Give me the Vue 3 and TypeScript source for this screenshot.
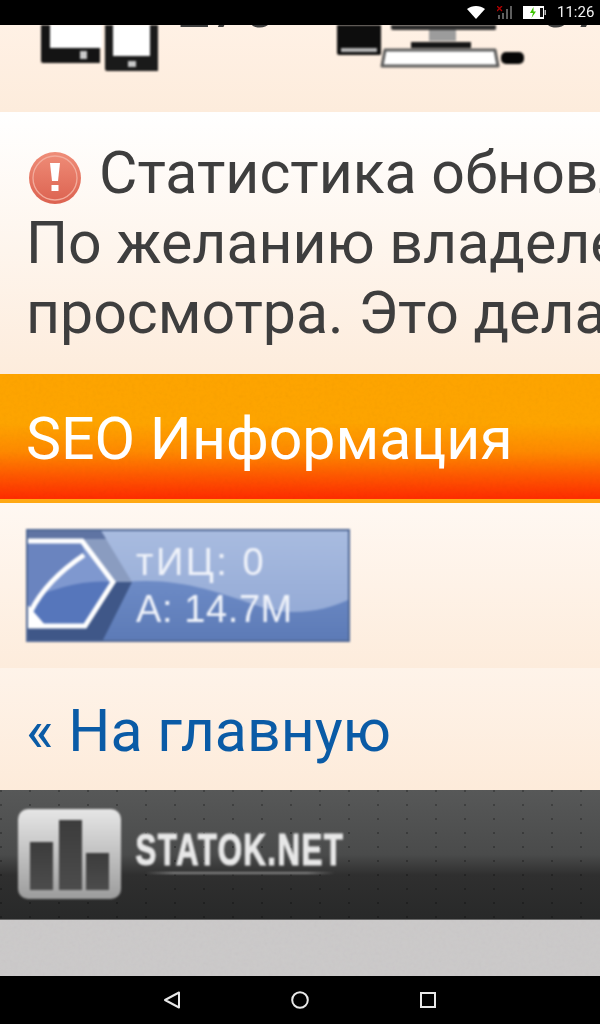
<script setup lang="ts">
const lines: string[] = ['По желанию владелец сайта', 'просмотра. Это делается бесплатно']
</script>

<template>
  <div class="phone">
    <svg class="defs" width="0" height="0">
      <defs>
        <filter id="grain" x="0" y="0" width="100%" height="100%">
          <feTurbulence type="fractalNoise" baseFrequency="0.28" numOctaves="2" seed="4" />
          <feColorMatrix type="saturate" values="0.400" />
        </filter>
      </defs>
    </svg>
    <header class="status">
      <svg class="wifi" width="18" height="13" viewBox="0 0 18 13"><path d="M0 3 C5 -1 13 -1 18 3 L9 13 Z" fill="#fff" /></svg>
      <svg class="signal" width="15" height="13" viewBox="0 0 15 13">
        <path d="M1 9h2v4H1zM5 7h2v6H5zM9 3h2v10H9zM13 0h2v13h-2z" fill="#5e5e5e" />
        <path d="M0 0 L5 5 M5 0 L0 5" stroke="#b00000" stroke-width="1.300" />
      </svg>
      <svg class="battery" width="23" height="13" viewBox="0 0 23 13">
        <rect x="0" y="0" width="21" height="13" fill="#fff" />
        <rect x="17" y="2" width="3" height="9" fill="#111" />
        <rect x="21.500" y="4" width="1.500" height="5" fill="#bbb" />
        <path d="M10.500 1 L7 7 H10 L8.500 12 L13 5.500 H10.500 Z" fill="#3cc400" />
      </svg>
      <span class="clock">11:26</span>
    </header>

    <main class="page">
      <section class="devices">
        <div class="device-row">
          <svg class="dev-a" width="120" height="48" viewBox="0 0 120 48">
            <path d="M1 0H60V38H3Q1 38 1 36Z" fill="#141414" />
            <path d="M65 0H118V46H67Q65 46 65 44Z" fill="#1a1a1a" />
            <rect x="10" y="0" width="52" height="23" fill="#fff" />
            <rect x="40" y="26" width="7" height="8" fill="#c9c9c9" />
            <rect x="73" y="0" width="37" height="31" fill="#fff" />
            <rect x="88" y="36" width="8" height="6" fill="#c9c9c9" />
          </svg>
          <span class="dev-num">270</span>
          <svg class="dev-b" width="190" height="44" viewBox="0 0 190 44">
            <path d="M0 0H44V29Q44 30 42 30H2Q0 30 0 28Z" fill="#0d0d0d" />
            <rect x="4" y="23" width="36" height="4" fill="#b5b5b5" />
            <path d="M54 0H159V4Q159 5 157 5H56Q54 5 54 3Z" fill="#2a2a2a" />
            <rect x="92" y="5" width="27" height="11" fill="#9c9c9c" />
            <rect x="74" y="17" width="60" height="6" fill="#161616" />
            <path d="M48 25H158L161 41H45Z" fill="#fff" stroke="#5c5c5c" stroke-width="3" stroke-linejoin="round" />
            <rect x="164" y="27" width="23" height="12" rx="5" fill="#060606" />
          </svg>
          <span class="dev-num dev-num-b">07</span>
        </div>
      </section>

      <section class="notice">
        <p class="notice-line">
          <svg class="alert" width="54" height="54" viewBox="0 0 54 54">
            <defs>
              <linearGradient id="alertFill" x1="0" y1="0" x2="0" y2="1">
                <stop offset="0" stop-color="#ef8d78" />
                <stop offset="1" stop-color="#dc6250" />
              </linearGradient>
            </defs>
            <circle cx="27" cy="27" r="26" fill="url(#alertFill)" />
            <circle cx="27" cy="27" r="22" fill="none" stroke="#f3ac9c" stroke-width="1.300" />
            <path d="M22 12h10l-2 18h-6z" fill="#fff" />
            <rect x="23.500" y="34" width="7" height="6" fill="#fff" />
          </svg>
          <span>Статистика обновляется</span>
        </p>
        <p v-for="line in lines" :key="line" class="notice-line">{{ line }}</p>
      </section>

      <h2 class="seo-title">
        <svg class="grain grain-hot" width="600" height="125"><rect width="600" height="125" filter="url(#grain)" /></svg>
        <span class="seo-text">SEO Информация</span>
      </h2>

      <section class="badge-wrap">
        <div class="badge">
          <svg class="badge-art" width="324" height="113" viewBox="0 0 324 113">
            <defs>
              <linearGradient id="bTop" x1="0" y1="0" x2="0" y2="1">
                <stop offset="0" stop-color="#a9bce0" />
                <stop offset="1" stop-color="#8ea5d3" />
              </linearGradient>
              <linearGradient id="bLow" x1="0" y1="0" x2="0" y2="1">
                <stop offset="0" stop-color="#6d8bc6" />
                <stop offset="1" stop-color="#5c7ab6" />
              </linearGradient>
            </defs>
            <rect width="324" height="113" fill="url(#bTop)" />
            <path d="M100 53 C150 48 190 62 235 78 C265 88 300 82 324 70 V113 H76Z" fill="url(#bLow)" />
            <path d="M0 0H74L106 53H0Z" fill="#8a9cc0" />
            <path d="M0 0H74L80 10H0Z" fill="#5f74a3" />
            <path d="M0 53H106L76 113H0Z" fill="#3f5788" />
            <path d="M0 12H56L87 53 59 97H0Z" fill="#7f98cf" />
            <path d="M88 53 59 97H0V70C30 60 55 50 88 53Z" fill="#5676bb" />
            <path d="M0 12H56L58 26C34 42 16 60 5 82L0 90Z" fill="#6a84bf" />
            <path d="M0 12H56L87 53 59 97H0" fill="none" stroke="#fff" stroke-width="5" />
            <path d="M58 26 C34 42 16 60 5 82" fill="none" stroke="#fff" stroke-width="5" />
            <path d="M0 74L20 97H0Z" fill="#fff" />
            <rect x="1" y="1" width="322" height="111" fill="none" stroke="#4f6794" stroke-width="2" />
          </svg>
          <span class="badge-text badge-t1">тИЦ: 0</span>
          <span class="badge-text badge-t2">А: 14.7M</span>
        </div>
      </section>

      <section class="home-row">
        <a class="home-link" href="#">« На главную</a>
      </section>

      <footer class="logo-bar">
        <svg class="logo-icon" width="103" height="90" viewBox="0 0 103 90">
          <defs>
            <linearGradient id="logoFill" x1="0" y1="0" x2="0" y2="1">
              <stop offset="0" stop-color="#e6e6e6" />
              <stop offset="1" stop-color="#9c9c9c" />
            </linearGradient>
            <linearGradient id="barFill" x1="0" y1="0" x2="0" y2="1">
              <stop offset="0" stop-color="#3c3c3c" />
              <stop offset="1" stop-color="#4c4c4c" />
            </linearGradient>
          </defs>
          <rect width="103" height="90" rx="10" fill="url(#logoFill)" />
          <rect x="12" y="33" width="23" height="48" fill="url(#barFill)" />
          <rect x="41" y="11" width="23" height="70" fill="url(#barFill)" />
          <rect x="68" y="44" width="23" height="37" fill="url(#barFill)" />
        </svg>
        <div class="logo-brand">
          <span class="logo-word">STATOK.NET</span>
          <span class="logo-rule"></span>
        </div>
      </footer>

      <div class="gray-fill">
        <svg class="grain grain-soft" width="600" height="56"><rect width="600" height="56" filter="url(#grain)" /></svg>
      </div>
    </main>

    <nav class="softkeys">
      <svg width="20" height="20" viewBox="0 0 20 20"><path d="M17 2.500 V17.500 L3 10 Z" fill="none" stroke="#e8e8e8" stroke-width="2" stroke-linejoin="round" /></svg>
      <svg width="20" height="20" viewBox="0 0 20 20"><circle cx="10" cy="10" r="7.800" fill="none" stroke="#e8e8e8" stroke-width="2" /></svg>
      <svg width="20" height="20" viewBox="0 0 20 20"><rect x="3" y="3" width="14" height="14" fill="none" stroke="#e8e8e8" stroke-width="2" /></svg>
    </nav>
  </div>
</template>

<style scoped>
.phone {
  width: 600px;
  height: 1024px;
  display: flex;
  flex-direction: column;
  overflow: hidden;
  font-family: Roboto, "Noto Sans", sans-serif;
  background: #000;
}
.defs { position: absolute; }
.status {
  flex: 0 0 25px;
  height: 25px;
  background: #000;
  display: flex;
  align-items: center;
  justify-content: flex-end;
  padding-right: 8px;
  box-sizing: border-box;
  position: relative;
  z-index: 1;
}
.wifi { margin-right: 12px; }
.signal { margin-right: 11px; }
.battery { margin-right: 11px; }
.clock { color: #f2f2f2; font-size: 15px; line-height: 25px; width: 35px; white-space: nowrap; }
.page { flex: 1; min-height: 0; overflow: hidden; display: flex; flex-direction: column; }
.devices {
  flex: 0 0 87px;
  background: linear-gradient(#fff1e5, #fdecdc);
}
.device-row { display: flex; align-items: flex-start; padding-left: 40px; }
.dev-a { flex: none; filter: blur(.8px); }
.dev-num {
  font-size: 59px;
  line-height: 59px;
  margin-top: -48px;
  margin-left: 17px;
  color: #3e3e3e;
  flex: none;
}
.dev-b { flex: none; margin-left: 61px; filter: blur(.8px); }
.dev-num-b { margin-left: 12px; }
.notice {
  flex: 0 0 262px;
  box-sizing: border-box;
  padding: 26px 0 0 26px;
  background: linear-gradient(#fff, #fdecdc);
  overflow: hidden;
}
.notice-line {
  margin: 0;
  font-size: 59px;
  line-height: 70px;
  color: #3e3e3e;
  white-space: nowrap;
}
.alert { vertical-align: -12px; margin: 0 17px 0 2px; filter: blur(.7px); }
.seo-title {
  margin: 0;
  flex: 0 0 129px;
  height: 129px;
  box-sizing: border-box;
  padding-left: 26px;
  font-weight: 400;
  font-size: 59px;
  line-height: 130px;
  color: #fff;
  position: relative;
  overflow: hidden;
  background: linear-gradient(#ffa500 0, #ffa500 38%, #ff8a00 60%, #ff5500 80%, #ff2c00 96.500%, #ffa914 97%);
}
.grain {
  position: absolute;
  left: 0;
  top: 0;
  opacity: .09;
  filter: blur(.5px);
}
.grain-hot { mix-blend-mode: multiply; opacity: .08; }
.seo-text { position: relative; }
.badge-wrap {
  flex: 0 0 165px;
  box-sizing: border-box;
  padding: 26px 0 0 26px;
  background: linear-gradient(#fff8f2, #fdecdc);
}
.badge { position: relative; width: 324px; height: 113px; filter: blur(.8px); }
.badge-art { display: block; }
.badge-text {
  position: absolute;
  left: 110px;
  color: #f0f3fa;
  font-family: "Liberation Sans", sans-serif;
  font-size: 38px;
  line-height: 40px;
  white-space: nowrap;
}
.badge-t1 { top: 13px; letter-spacing: 2.500px; }
.badge-t2 { top: 60px; letter-spacing: .6px; }
.home-row {
  flex: 0 0 122px;
  height: 122px;
  box-sizing: border-box;
  padding-left: 26px;
  background: linear-gradient(#fef3e9, #fdebda);
  overflow: hidden;
}
.home-link { display: block; font-size: 59px; line-height: 126px; color: #0a5ba6; text-decoration: none; white-space: nowrap; }
.logo-bar {
  flex: 0 0 130px;
  height: 130px;
  box-sizing: border-box;
  display: flex;
  align-items: flex-start;
  padding: 19px 0 0 18px;
  background:
    radial-gradient(circle at 1px 1px, rgba(0, 0, 0, .25) 1px, transparent 1.500px) 0 0 / 29px 14px,
    linear-gradient(#575858 0, #4a4b4b 50%, #2f2f2f 66%, #282929 100%);
  border-bottom: 1px solid #666;
}
.logo-icon { filter: blur(.8px); flex: none; }
.logo-brand {
  display: flex;
  flex-direction: column;
  align-items: center;
  width: 208px;
  margin-left: 15px;
  margin-top: 22px;
  filter: blur(.9px);
}
.logo-word {
  font-family: "Liberation Sans", sans-serif;
  font-weight: 700;
  font-size: 44px;
  line-height: 38px;
  color: #e8e8e8;
  transform: scaleX(.71);
  letter-spacing: 2px;
  white-space: nowrap;
  -webkit-text-stroke: 1.200px #e8e8e8;
}
.logo-rule {
  width: 190px;
  height: 2px;
  margin-top: 3px;
  background: linear-gradient(90deg, transparent, #888 15%, #888 85%, transparent);
}
.gray-fill { flex: 1; background: #cbc9c9; position: relative; overflow: hidden; }
.grain-soft { opacity: .06; }
.softkeys {
  flex: 0 0 48px;
  background: #000;
  display: flex;
  align-items: center;
  justify-content: center;
  gap: 108px;
}
</style>
